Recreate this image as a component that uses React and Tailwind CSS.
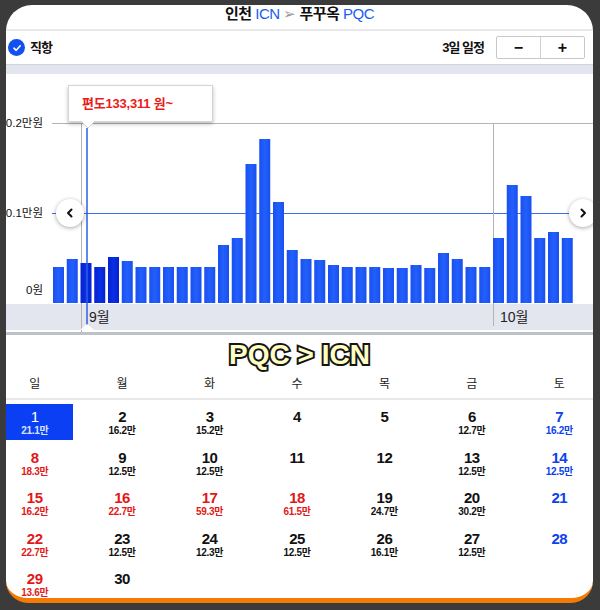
import React from 'react';

const BARS = [
  36, 44, 40, 36, 46, 42, 36, 36, 36, 36, 36, 36, 58, 65, 139, 164, 101, 53, 44, 43,
  38, 36, 36, 36, 35, 35, 38, 35, 50, 44, 36, 36, 65, 118, 107, 65, 71, 65,
];

const DAYS = ['일', '월', '화', '수', '목', '금', '토'];

const WEEKS = [
  [{ d: 1, p: '21.1만', sel: true }, { d: 2, p: '16.2만' }, { d: 3, p: '15.2만' }, { d: 4 }, { d: 5 }, { d: 6, p: '12.7만' }, { d: 7, p: '16.2만' }],
  [{ d: 8, p: '18.3만' }, { d: 9, p: '12.5만' }, { d: 10, p: '12.5만' }, { d: 11 }, { d: 12 }, { d: 13, p: '12.5만' }, { d: 14, p: '12.5만' }],
  [{ d: 15, p: '16.2만' }, { d: 16, p: '22.7만', hol: true }, { d: 17, p: '59.3만', hol: true }, { d: 18, p: '61.5만', hol: true }, { d: 19, p: '24.7만' }, { d: 20, p: '30.2만' }, { d: 21 }],
  [{ d: 22, p: '22.7만' }, { d: 23, p: '12.5만' }, { d: 24, p: '12.3만' }, { d: 25, p: '12.5만' }, { d: 26, p: '16.1만' }, { d: 27, p: '12.5만' }, { d: 28 }],
  [{ d: 29, p: '13.6만' }, { d: 30 }, null, null, null, null, null],
];

const Chevron = ({ dir }) => (
  <svg width="10" height="10" viewBox="0 0 10 10">
    <path
      d={dir === 'left' ? 'M6.5 1.5 L3 5 L6.5 8.5' : 'M3.5 1.5 L7 5 L3.5 8.5'}
      fill="none"
      stroke="#111"
      strokeWidth="2"
      strokeLinecap="round"
      strokeLinejoin="round"
    />
  </svg>
);

const Chart = () => (
  <div className="relative">
    {/* plot area */}
    <div className="h-[230px] bg-white" />
    {/* month axis */}
    <div className="relative h-[26px] bg-[#e4e6ef]">
      <span className="absolute left-[83px] top-[3px] text-[14px] leading-[20px] text-[#222]">9월</span>
      <span className="absolute left-[494px] top-[3px] text-[14px] leading-[20px] text-[#222]">10월</span>
    </div>
    <div className="h-[2px] bg-white" />
    <div className="h-[3px] bg-[#bfc1c9]" />

    <svg className="absolute left-0 top-0 pointer-events-none" width="587" height="261">
      <defs>
        <linearGradient id="gb" x1="0" x2="1" y1="0" y2="0">
          <stop offset="0" stopColor="#1a4ff0" />
          <stop offset="0.5" stopColor="#2260fb" />
          <stop offset="1" stopColor="#1a4ff0" />
        </linearGradient>
        <linearGradient id="gd" x1="0" x2="1" y1="0" y2="0">
          <stop offset="0" stopColor="#0422d2" />
          <stop offset="0.5" stopColor="#0a2fe4" />
          <stop offset="1" stopColor="#0422d2" />
        </linearGradient>
      </defs>
      <line x1="46" y1="49.5" x2="587" y2="49.5" stroke="#b3b3b8" strokeWidth="1" />
      <line x1="46" y1="139.5" x2="587" y2="139.5" stroke="#3a6ff0" strokeWidth="1" />
      <line x1="75.5" y1="49" x2="75.5" y2="258" stroke="#b3b3b8" strokeWidth="1" />
      <line x1="487.5" y1="49" x2="487.5" y2="252" stroke="#b3b3b8" strokeWidth="1" />
      {BARS.map((h, i) => (
        <rect
          key={i}
          x={47 + i * 13.75}
          y={229 - h}
          width="11"
          height={h}
          fill={i >= 2 && i <= 4 ? 'url(#gd)' : 'url(#gb)'}
        />
      ))}
      <line x1="81" y1="54" x2="81" y2="256" stroke="#2d5fe6" strokeWidth="1.5" />
      <polygon points="74,256 81,250 88,256" fill="#ffffff" />
    </svg>

    {/* y axis labels */}
    <span className="absolute right-[550px] top-[41px] whitespace-nowrap text-[11.5px] leading-[16px] text-[#111]">30.2만원</span>
    <span className="absolute right-[550px] top-[131px] whitespace-nowrap text-[11.5px] leading-[16px] text-[#111]">30.1만원</span>
    <span className="absolute right-[550px] top-[208px] whitespace-nowrap text-[11.5px] leading-[16px] text-[#111]">0원</span>

    {/* tooltip */}
    <div className="absolute left-[62px] top-[11px] w-[145px] h-[37px] bg-white border border-[#d4d4d8] shadow-[0_2px_4px_rgba(0,0,0,0.25)] flex items-center pl-[13px]">
      <span className="text-[13px] font-bold text-[#ec1c1c] tracking-[-0.2px]">편도133,311 원~</span>
      <svg className="absolute left-[12px] bottom-[-7px]" width="14" height="7" viewBox="0 0 14 7">
        <polygon points="0,0 14,0 7,7" fill="#ffffff" />
        <polyline points="0,0 7,7 14,0" fill="none" stroke="#d4d4d8" strokeWidth="1" />
      </svg>
    </div>

    {/* nav buttons */}
    <div className="absolute left-[50px] top-[125px] w-[28px] h-[28px] rounded-full bg-white shadow-[0_1px_4px_rgba(0,0,0,0.35)] flex items-center justify-center">
      <Chevron dir="left" />
    </div>
    <div className="absolute left-[563px] top-[125px] w-[28px] h-[28px] rounded-full bg-white shadow-[0_1px_4px_rgba(0,0,0,0.35)] flex items-center justify-center">
      <Chevron dir="right" />
    </div>
  </div>
);

const DayCell = ({ cell, col }) => {
  if (!cell) return <div className="h-[40.5px]" />;
  const red = col === 0 || cell.hol;
  const blue = col === 6;
  let numColor = 'text-[#111]';
  let priceColor = 'text-[#111]';
  if (red) {
    numColor = 'text-[#e21818]';
    priceColor = 'text-[#e21818]';
  }
  if (blue) {
    numColor = 'text-[#0b42ec]';
    priceColor = 'text-[#0b42ec]';
  }
  if (cell.sel) {
    numColor = 'text-white font-normal';
    priceColor = 'text-[#d8e4ff]';
  }
  return (
    <div className="relative h-[40.5px] flex flex-col items-center pt-[7px]">
      {cell.sel && <div className="absolute top-[2px] bottom-[2.5px] left-[4px] right-[5px] bg-[#0b3ff3]" />}
      <span className={`relative text-[15px] leading-[16px] font-bold tracking-[-0.5px] ${numColor}`}>{cell.d}</span>
      {cell.p && (
        <span className={`relative text-[10px] leading-[12px] font-bold tracking-[-0.3px] ${priceColor}`}>{cell.p}</span>
      )}
    </div>
  );
};

export default function App() {
  return (
    <div className="w-[600px] h-[610px] overflow-hidden bg-[#3b3b3b] font-['Liberation_Sans','Noto_Sans_CJK_KR',sans-serif]">
      <div className="ml-[6px] mt-[5px] w-[587px] h-[598px] overflow-hidden bg-white rounded-t-[26px] rounded-b-[22px] border-b-[5px] border-[#f27a05]">
        {/* title */}
        <div className="h-[24px] flex justify-center">
          <div className="pt-[1px] text-[15px] leading-[16px] tracking-[-0.5px] whitespace-nowrap">
            <span className="font-bold text-[#111]">인천 </span>
            <span className="text-[#1a5cf0]">ICN</span>
            <span className="text-[#9a9a9a]"> ➢ </span>
            <span className="font-bold text-[#111]">푸꾸옥 </span>
            <span className="text-[#1a5cf0]">PQC</span>
          </div>
        </div>
        <div className="h-[2px] bg-[#e8e8ec]" />

        {/* filter row */}
        <div className="h-[33px] flex items-center justify-between pl-[2px] pr-[8px]">
          <div className="flex items-center gap-[5px]">
            <div className="w-[17px] h-[17px] rounded-full bg-[#1251f0] flex items-center justify-center">
              <svg width="10" height="10" viewBox="0 0 10 10">
                <path d="M2 5.2 L4.2 7.3 L8.2 2.8" fill="none" stroke="#fff" strokeWidth="1.6" strokeLinecap="round" strokeLinejoin="round" />
              </svg>
            </div>
            <span className="text-[13px] font-bold tracking-[-1px] text-[#111]">직항</span>
          </div>
          <div className="flex items-center gap-[12px]">
            <span className="text-[13px] font-bold tracking-[-1px] text-[#111]">3일 일정</span>
            <div className="flex h-[23px] w-[89px] border border-[#c8c8cc] rounded-[2px] bg-white">
              <div className="flex-1 flex items-center justify-center border-r border-[#d0d0d4] text-[16px] font-bold text-[#111]">−</div>
              <div className="flex-1 flex items-center justify-center text-[16px] font-bold text-[#111]">+</div>
            </div>
          </div>
        </div>
        <div className="h-[10px] bg-[#e3e5ee] border-t border-[#d2d4dc]" />

        <Chart />

        {/* return route */}
        <div className="h-[35px] pt-[5px] flex items-center justify-center">
          <span className="text-[28px] font-bold leading-[30px] text-[#ffffc4] [-webkit-text-stroke:4px_#151515] [paint-order:stroke_fill]">
            PQC &gt; ICN
          </span>
        </div>

        {/* calendar */}
        <div className="ml-[-15px] w-[612px]">
          <div className="grid grid-cols-7 h-[28px] items-center">
            {DAYS.map((d) => (
              <div key={d} className="text-center text-[12px] text-[#222]">{d}</div>
            ))}
          </div>
          <div className="h-[2px] bg-[#e8e8e8]" />
          <div className="pt-[2px]">
            {WEEKS.map((week, wi) => (
              <div key={wi} className="grid grid-cols-7">
                {week.map((cell, ci) => (
                  <DayCell key={ci} cell={cell} col={ci} />
                ))}
              </div>
            ))}
          </div>
        </div>
      </div>
    </div>
  );
}
